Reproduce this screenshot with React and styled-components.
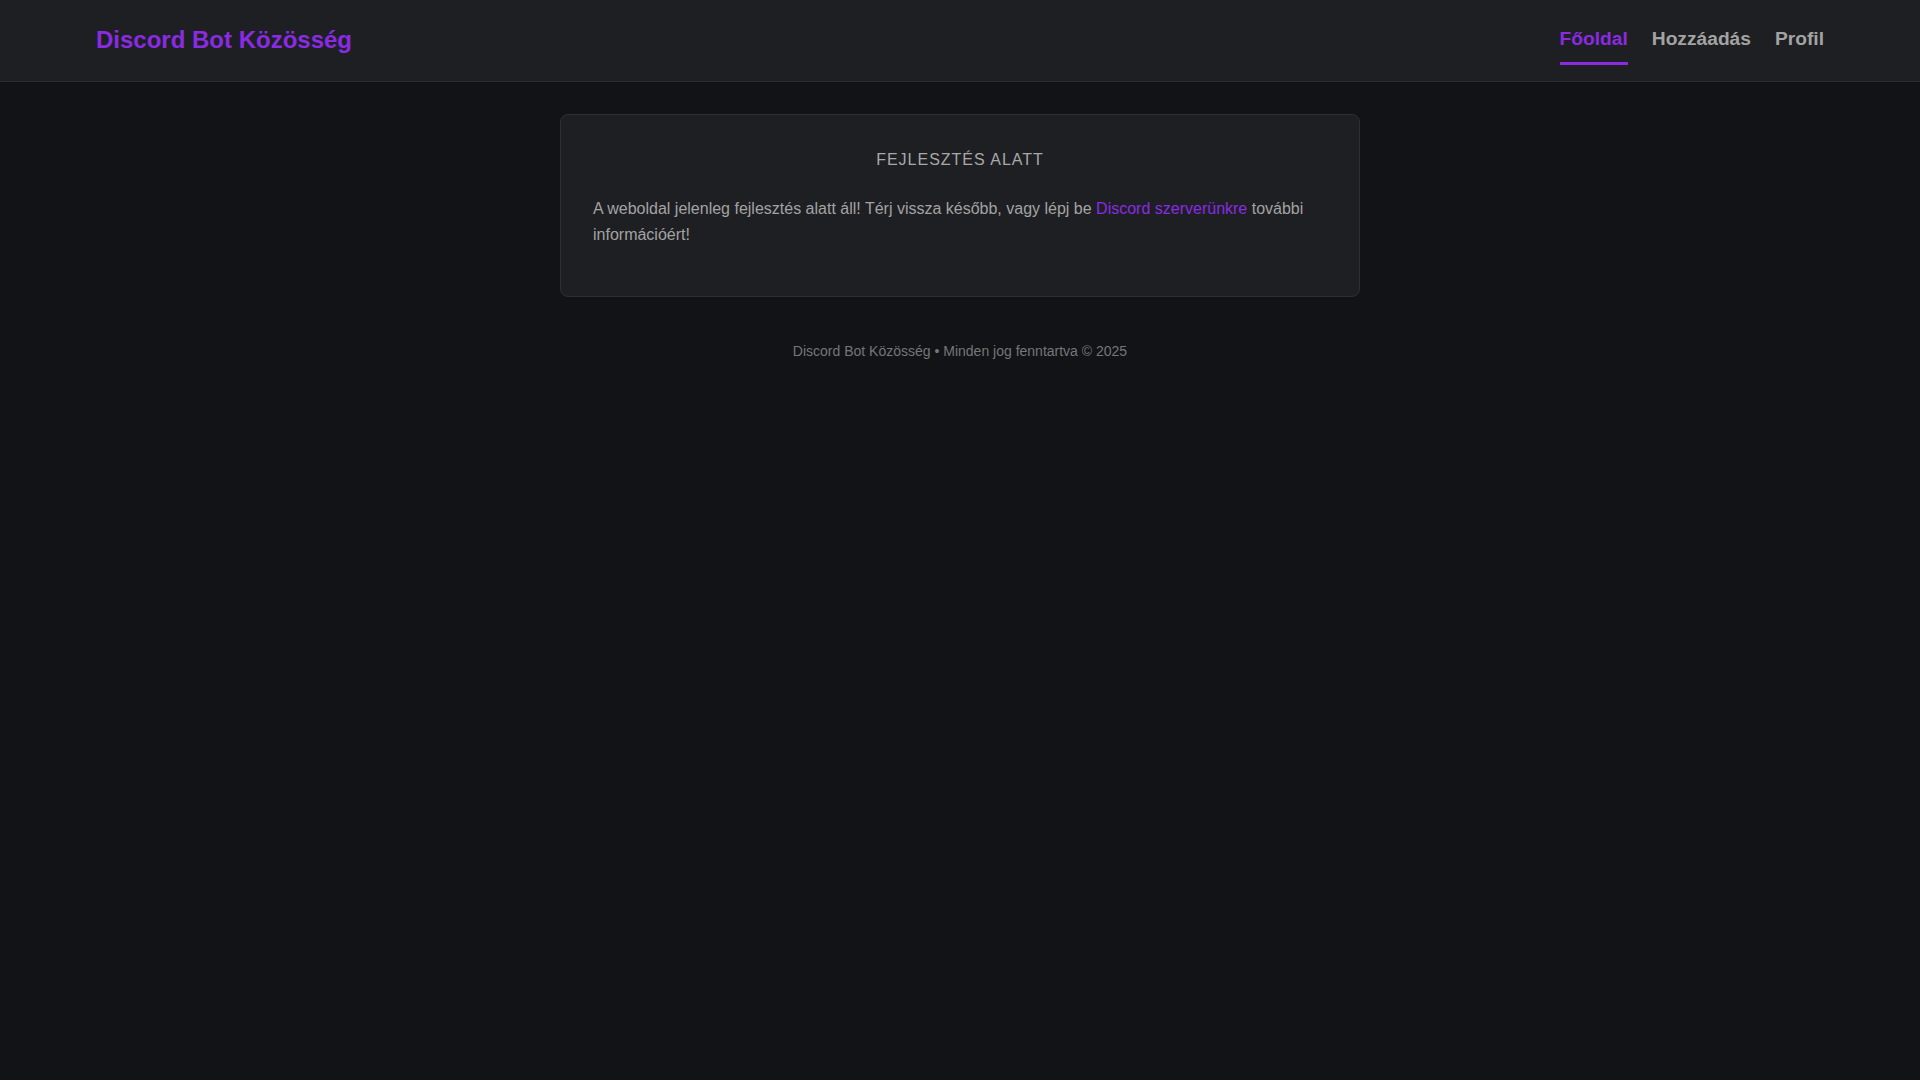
import React from "react";
import styled, { createGlobalStyle } from "styled-components";

const GlobalStyle = createGlobalStyle`
  * { box-sizing: border-box; }
  html, body {
    margin: 0;
    padding: 0;
    background: #121316;
    font-family: "Liberation Sans", Arial, sans-serif;
    color: #a6a6a6;
  }
  body { min-height: 100vh; }
`;

const Page = styled.div`
  min-height: 100vh;
  background: #121316;
  display: flex;
  flex-direction: column;
`;

const Header = styled.header`
  height: 82px;
  padding: 0 96px;
  background: #1e1f22;
  border-bottom: 1px solid #2c2d30;
  display: flex;
  align-items: center;
  justify-content: space-between;
`;

const Brand = styled.a`
  font-size: 24px;
  font-weight: 700;
  color: #8a2be2;
  text-decoration: none;
  line-height: normal;
  padding-bottom: 2px;
`;

const Nav = styled.nav`
  display: flex;
  gap: 24px;
  align-items: center;
`;

const NavLink = styled.a`
  font-size: 19.2px;
  font-weight: 700;
  line-height: normal;
  text-decoration: none;
  padding: 12px 0 12px;
  color: ${(p) => (p.$active ? "#8a2be2" : "#a3a3a3")};
  border-bottom: 3px solid ${(p) => (p.$active ? "#8a2be2" : "transparent")};
`;

const Main = styled.main`
  padding: 32px 16px;
  display: flex;
  justify-content: center;
`;

const Card = styled.section`
  width: 800px;
  background: #1e1f22;
  border: 1px solid #2e2f33;
  border-radius: 8px;
  padding: 32px;
`;

const CardTitle = styled.h2`
  margin: 0 0 23.2px;
  font-size: 16px;
  font-weight: 400;
  line-height: 1.6;
  letter-spacing: 1px;
  text-align: center;
  color: #a8a8a8;
`;

const Text = styled.p`
  margin: 0 0 16px;
  font-size: 16px;
  line-height: 26.2px;
  color: #a3a3a3;
`;

const Link = styled.a`
  color: #8a2be2;
  text-decoration: none;
`;

const Footer = styled.footer`
  padding: 10.6px 16px;
  text-align: center;
  font-size: 14px;
  line-height: 1.6;
  color: #767676;
`;

export default function App() {
  return (
    <>
      <GlobalStyle />
      <Page>
        <Header>
          <Brand href="#">Discord Bot Közösség</Brand>
          <Nav>
            <NavLink href="#" $active>Főoldal</NavLink>
            <NavLink href="#">Hozzáadás</NavLink>
            <NavLink href="#">Profil</NavLink>
          </Nav>
        </Header>
        <Main>
          <Card>
            <CardTitle>FEJLESZTÉS ALATT</CardTitle>
            <Text>
              A weboldal jelenleg fejlesztés alatt áll! Térj vissza később, vagy lépj be{" "}
              <Link href="#">Discord szerverünkre</Link> további információért!
            </Text>
          </Card>
        </Main>
        <Footer>Discord Bot Közösség • Minden jog fenntartva © 2025</Footer>
      </Page>
    </>
  );
}
